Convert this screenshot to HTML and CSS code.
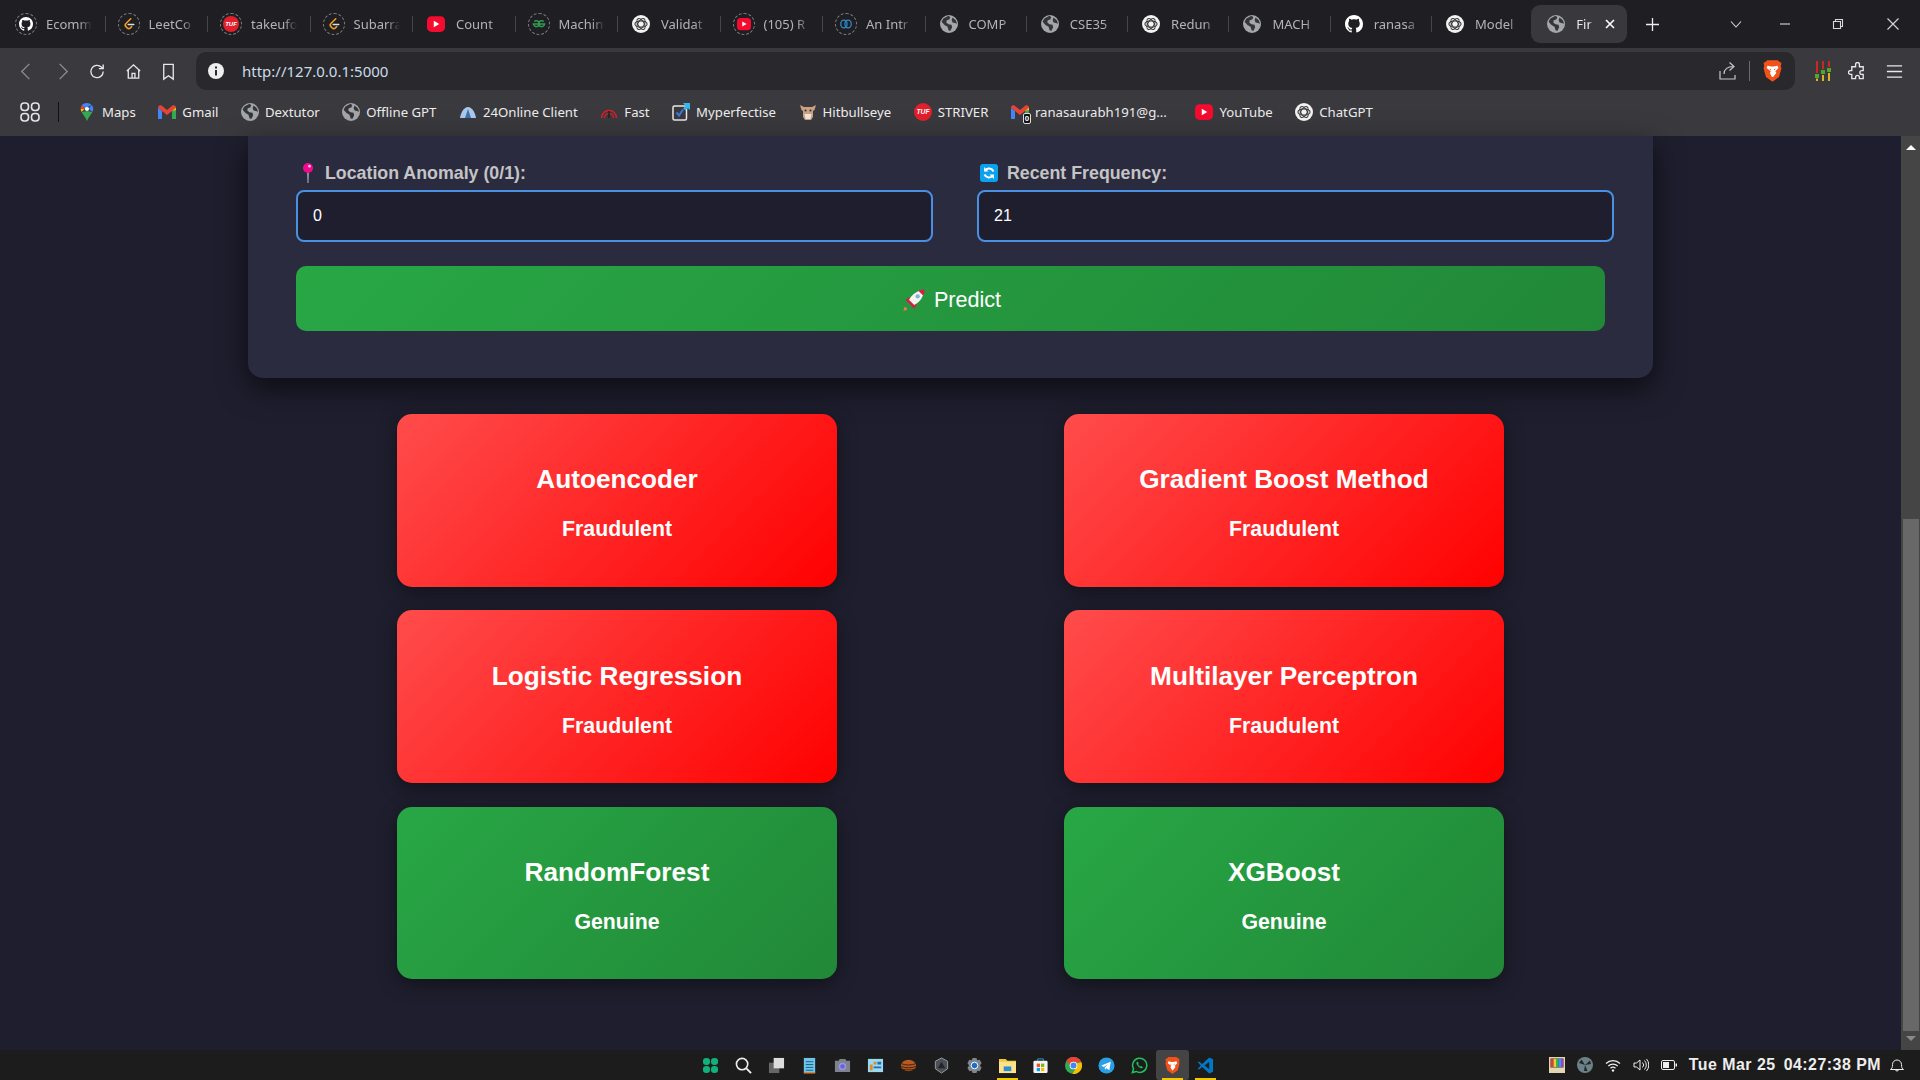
FILE: index.html
```html
<!DOCTYPE html>
<html lang="en">
<head>
<meta charset="utf-8">
<title>Fraud Detection</title>
<link rel="stylesheet" href="styles.css">
</head>
<body>
<svg class="sprite" xmlns="http://www.w3.org/2000/svg">
  <symbol id="github" viewBox="0 0 16 16"><path fill="#fff" d="M8 0C3.58 0 0 3.58 0 8c0 3.54 2.29 6.53 5.47 7.59.4.07.55-.17.55-.38 0-.19-.01-.82-.01-1.49-2.01.37-2.53-.49-2.69-.94-.09-.23-.48-.94-.82-1.13-.28-.15-.68-.52-.01-.53.63-.01 1.08.58 1.23.82.72 1.21 1.87.87 2.33.66.07-.52.28-.87.51-1.07-1.78-.2-3.64-.89-3.64-3.95 0-.87.31-1.59.82-2.15-.08-.2-.36-1.02.08-2.12 0 0 .67-.21 2.2.82.64-.18 1.32-.27 2-.27.68 0 1.36.09 2 .27 1.53-1.04 2.2-.82 2.2-.82.44 1.1.16 1.92.08 2.12.51.56.82 1.27.82 2.15 0 3.07-1.87 3.75-3.65 3.95.29.25.54.73.54 1.48 0 1.07-.01 1.93-.01 2.2 0 .21.15.46.55.38A8.013 8.013 0 0016 8c0-4.42-3.58-8-8-8z"/></symbol>
  <symbol id="leet" viewBox="0 0 16 16"><path fill="none" stroke="#f0a020" stroke-width="1.8" stroke-linecap="round" d="M10 2 4.5 7.5a2.5 2.5 0 0 0 0 3.5l1.5 1.5a2.5 2.5 0 0 0 3.5 0l1.5-1.5"/><path stroke="#ddd" stroke-width="1.6" stroke-linecap="round" d="M7 8.6h6.5"/></symbol>
  <symbol id="tuf" viewBox="0 0 16 16"><circle cx="8" cy="8" r="8" fill="#e0202c"/><text x="8" y="10" font-size="6" font-weight="700" font-style="italic" font-family="Liberation Sans" text-anchor="middle" fill="#fff">TUF</text></symbol>
  <symbol id="yt" viewBox="0 0 16 16"><rect x="0" y="1" width="16" height="14" rx="4" fill="#f40b2f"/><path fill="#fff" d="M6 5.2v5.6L11 8z"/></symbol>
  <symbol id="gfg" viewBox="0 0 16 16"><g fill="none" stroke="#2f9e4f" stroke-width="1.6"><path d="M8 8h6.4a3.4 3.4 0 1 1-1-2.8"/><path d="M8 8H1.6a3.4 3.4 0 1 0 1-2.8"/></g></symbol>
  <symbol id="gpt" viewBox="0 0 16 16"><circle cx="8" cy="8" r="8" fill="#f2f2f2"/><g fill="none" stroke="#3a3a3a" stroke-width="1"><ellipse cx="8" cy="8" rx="5.4" ry="2.8"/><ellipse cx="8" cy="8" rx="5.4" ry="2.8" transform="rotate(60 8 8)"/><ellipse cx="8" cy="8" rx="5.4" ry="2.8" transform="rotate(120 8 8)"/></g></symbol>
  <symbol id="intro" viewBox="0 0 16 16"><g fill="none" stroke="#2f86c4" stroke-width="1.5"><ellipse cx="5.6" cy="8" rx="3.6" ry="4.4"/><ellipse cx="10.4" cy="8" rx="3.6" ry="4.4"/></g></symbol>
  <symbol id="globe" viewBox="0 0 16 16"><circle cx="8" cy="8" r="8" fill="#a4a6a9"/><path fill="#34353a" d="M3 3.2 7.6.6l1.6 1.5-1 2-2.2.6-.4 2 1.9 1.6 2.7.3.6 2.2-1.5 3.2-1.6-.3-1-3.2-2.7-1.6L1.4 6zM11.2 2.2l3 2.6.9 3-1.9-.7-2-.4-.9-2.3z"/></symbol>
  <symbol id="maps" viewBox="0 0 16 20"><path fill="#34a853" d="M8 20C6.6 16 3.5 13 2 10l6-1 6 1c-1.5 3-4.600 6-6 10z"/><path fill="#fbbc04" d="M1 6.500c0 1.500.4 2.500 1 3.500l4-4z"/><path fill="#ea4335" d="M2.200 2.200 6 6 1 6.500c0-1.700.4-3.100 1.200-4.300z"/><path fill="#4285f4" d="M8 0c2 0 3.800.9 5 2.300L6 6 2.200 2.200C3.500.8 5.600 0 8 0z"/><path fill="#4285f4" d="M13 2.300c1.300 1.200 2 2.800 2 4.400 0 1.200-.4 2.300-1 3.300L10 6.500z"/><circle cx="8" cy="6.700" r="2.300" fill="#fff"/></symbol>
  <symbol id="gmail" viewBox="0 0 18 14"><path fill="#4285f4" d="M0 2.500 0 14h4V6z"/><path fill="#34a853" d="M14 6v8h4V2.500z"/><path fill="#ea4335" d="M0 2.500C0 .5 2 -.5 3.500.6L9 5l5.500-4.400C16-.5 18 .5 18 2.500L14 6 9 10 4 6z"/><path fill="#fbbc04" d="M14 6 18 2.500V5z"/></symbol>
  <symbol id="online" viewBox="0 0 18 14"><path fill="#a9c8ea" d="M1 13C2 7 5 2 9 2s7 5 8 11z"/><path fill="#3e6fa8" d="M9 4l3 9H6z"/></symbol>
  <symbol id="fast" viewBox="0 0 18 14"><g fill="none" stroke="#d3222a" stroke-width="1.500"><path d="M1.500 13a7.500 7.500 0 0 1 15 0"/><path d="M4.500 13a4.500 4.500 0 0 1 9 0"/></g><path stroke="#222" stroke-width="1.500" d="M9 6v7"/></symbol>
  <symbol id="myp" viewBox="0 0 18 18"><rect x="1" y="3" width="13.500" height="14" rx="1.500" fill="none" stroke="#e8e8e8" stroke-width="1.500"/><path fill="none" stroke="#3a78d8" stroke-width="2" d="m4.500 9.500 2.500 3 4-6"/><path fill="#35b6ef" d="M11 0h7v7l-2.300-2-2.500 2.500-2-2L13.500 3z"/></symbol>
  <symbol id="hit" viewBox="0 0 18 18"><path fill="#c9a184" d="M1 2 5 4h8l4-2-1.500 5-1.500 1v6l-2 3H6l-2-3V8L2.500 7z"/><path fill="#f1e4d8" d="M5.500 11h7l-1 5h-5z"/><circle cx="6.500" cy="7.500" r="1" fill="#3b2a20"/><circle cx="11.500" cy="7.500" r="1" fill="#3b2a20"/></symbol>
  <symbol id="brave" viewBox="0 0 16 18"><path fill="#f1511b" d="M3.500 0h9L14 1.500l1.500.5-.5 3 .5 1.800-2 7.200L8 18l-5.500-4L.5 6.800 1 5 .5 2 2 1.500z"/><path fill="#fff" d="M3.800 4.500 7 5.300h2l3.200-.8.8 2-2.600 2.800.8 1.400L8.500 14h-1L5.800 10.700l.8-1.400L3 6.500z"/><path fill="#f1511b" d="M5.300 6.800 7 7.600l-.8.7zM10.700 6.800 9 7.600l.8.7z"/></symbol>
  <symbol id="chrome" viewBox="0 0 16 16"><circle cx="8" cy="8" r="8" fill="#34a853"/><path fill="#ea4335" d="M1.200 3.800A8 8 0 0 1 15.400 5H8a3 3 0 0 0-2.900 2.200z"/><path fill="#fbbc04" d="M15.400 5A8 8 0 0 1 7 16l3.600-6.200A3 3 0 0 0 10.700 6z"/><circle cx="8" cy="8" r="3.600" fill="#fff"/><circle cx="8" cy="8" r="2.800" fill="#4285f4"/></symbol>
</svg>

<div class="tabstrip">
  <div class="tab"><span class="fav ring"><svg class="i14"><use href="#github"/></svg></span><span class="tt">Ecomm</span></div>
  <div class="tab"><span class="fav ring"><svg class="i14"><use href="#leet"/></svg></span><span class="tt">LeetCo</span></div>
  <div class="tab"><span class="fav ring"><svg class="i16"><use href="#tuf"/></svg></span><span class="tt">takeufo</span></div>
  <div class="tab"><span class="fav ring"><svg class="i14"><use href="#leet"/></svg></span><span class="tt">Subarra</span></div>
  <div class="tab"><span class="fav"><svg class="i18"><use href="#yt"/></svg></span><span class="tt">Count</span></div>
  <div class="tab"><span class="fav ring"><svg class="i14"><use href="#gfg"/></svg></span><span class="tt">Machin</span></div>
  <div class="tab"><span class="fav"><svg class="i18"><use href="#gpt"/></svg></span><span class="tt">Validat</span></div>
  <div class="tab"><span class="fav ring"><svg class="i14"><use href="#yt"/></svg></span><span class="tt">(105) R</span></div>
  <div class="tab"><span class="fav ring"><svg class="i14"><use href="#intro"/></svg></span><span class="tt">An Intr</span></div>
  <div class="tab"><span class="fav"><svg class="i18"><use href="#globe"/></svg></span><span class="tt">COMP</span></div>
  <div class="tab"><span class="fav"><svg class="i18"><use href="#globe"/></svg></span><span class="tt">CSE35</span></div>
  <div class="tab"><span class="fav"><svg class="i18"><use href="#gpt"/></svg></span><span class="tt">Redun</span></div>
  <div class="tab"><span class="fav"><svg class="i18"><use href="#globe"/></svg></span><span class="tt">MACH</span></div>
  <div class="tab"><span class="fav"><svg class="i18"><use href="#github"/></svg></span><span class="tt">ranasa</span></div>
  <div class="tab"><span class="fav"><svg class="i18"><use href="#gpt"/></svg></span><span class="tt">Model</span></div>
  <div class="tab active"><span class="fav"><svg class="i18"><use href="#globe"/></svg></span><span class="tt short">Fir</span>
    <svg class="tabx" viewBox="0 0 10 10"><path d="M1 1l8 8M9 1l-8 8"/></svg></div>
  <svg class="newtab" viewBox="0 0 14 14"><path d="M7 0v14M0 7h14"/></svg>
  <div class="winctl">
    <svg viewBox="0 0 14 14"><path d="M2 4.500 7 10l5-5.500"/></svg>
    <svg viewBox="0 0 14 14"><path d="M2 7h10"/></svg>
    <svg viewBox="0 0 14 14"><path d="M2.500 4.500h7v7h-7zM4.500 4.500v-2h7v7h-2"/></svg>
    <svg viewBox="0 0 14 14"><path d="M1.500 1.500l11 11M12.500 1.500l-11 11"/></svg>
  </div>
</div>

<div class="toolbar">
  <svg class="nav dim" viewBox="0 0 20 20"><path d="M13 2 5 10l8 8"/></svg>
  <svg class="nav dim" viewBox="0 0 20 20"><path d="m7 2 8 8-8 8"/></svg>
  <svg class="nav" viewBox="0 0 20 20"><path d="M16 10a6.500 6.500 0 1 1-2-4.700L16 7M16 2.500V7h-4.500"/></svg>
  <svg class="nav" viewBox="0 0 20 20"><path d="M3 9.500 10 3l7 6.500M4.500 8.500V17h11V8.500M8.500 17v-5h3v5"/></svg>
  <svg class="nav" viewBox="0 0 20 20"><path d="M5 2.500h10V18l-5-3.500L5 18z"/></svg>
  <div class="address">
    <svg class="info" viewBox="0 0 16 16"><circle cx="8" cy="8" r="8" fill="#eee"/><path d="M7 3.500h2v2H7zM7 7h2v5.500H7z" fill="#29292d"/></svg>
    <span class="url">http://127.0.0.1:5000</span>
    <svg class="share" viewBox="0 0 20 20"><path d="M2 10v8h15v-4M6 13c0-5 4-7.500 9-7.500M11.500 1.500 16 5.500l-4.500 4"/></svg>
    <span class="vsep"></span>
    <svg class="brave"><use href="#brave"/></svg>
  </div>
  <svg class="bars" viewBox="0 0 18 20">
    <path fill="#c8281e" d="M2 0h2v12H2zM8 0h2v8H8zM14 0h2v6h-2z"/>
    <path fill="#4fa82a" d="M1 13h4v4H1zM7 9h4v4H7zM13 7h4v4h-4z"/>
    <path fill="#d8b41e" d="M2 17.500h2V20H2zM8 14h2v6H8zM14 12h2v8h-2z"/>
  </svg>
  <svg class="nav puzzle" viewBox="0 0 20 20"><path d="M8 2.500a2 2 0 0 1 4 0V5h4v4h-1.500a2 2 0 0 0 0 4H16v4.500h-4v-1.500a2 2 0 0 0-4 0v1.500H4V13H2.500a2 2 0 0 1 0-4H4V5h4z"/></svg>
  <svg class="nav menu" viewBox="0 0 20 20"><path d="M2 4h16M2 10h16M2 16h16"/></svg>
</div>

<div class="bookmarks">
  <svg class="apps" viewBox="0 0 20 20"><g fill="none" stroke="#e4e4e4" stroke-width="1.600"><rect x="1" y="1" width="7.500" height="7.500" rx="3.200"/><rect x="11.500" y="1" width="7.500" height="7.500" rx="3.200"/><rect x="1" y="11.500" width="7.500" height="7.500" rx="3.200"/><rect x="11.500" y="11.500" width="7.500" height="7.500" rx="3.200"/></g></svg>
  <span class="bsep"></span>
  <div class="bm first"><svg class="b-ic"><use href="#maps"/></svg>Maps</div>
  <div class="bm"><svg class="b-ic"><use href="#gmail"/></svg>Gmail</div>
  <div class="bm"><svg class="b-ic"><use href="#globe"/></svg>Dextutor</div>
  <div class="bm"><svg class="b-ic"><use href="#globe"/></svg>Offline GPT</div>
  <div class="bm"><svg class="b-ic"><use href="#online"/></svg>24Online Client</div>
  <div class="bm"><svg class="b-ic"><use href="#fast"/></svg>Fast</div>
  <div class="bm"><svg class="b-ic"><use href="#myp"/></svg>Myperfectise</div>
  <div class="bm"><svg class="b-ic"><use href="#hit"/></svg>Hitbullseye</div>
  <div class="bm"><svg class="b-ic"><use href="#tuf"/></svg>STRIVER</div>
  <div class="bm mail"><span class="mailic"><svg class="b-ic"><use href="#gmail"/></svg><span class="badge">0</span></span>ranasaurabh191@g...</div>
  <div class="bm"><svg class="b-ic"><use href="#yt"/></svg>YouTube</div>
  <div class="bm"><svg class="b-ic"><use href="#gpt"/></svg>ChatGPT</div>
</div>

<div class="viewport">
  <main class="page">
    <section class="panel">
      <div class="fields">
        <div class="field">
          <label class="lbl" for="loc">
            <svg class="emoji" viewBox="0 0 14 24"><path fill="#c9c9c9" d="M6.200 11h1.600l-.3 13h-1z"/><circle cx="7" cy="6" r="6" fill="#f20a8c"/><circle cx="8.800" cy="3.800" r="1.600" fill="#ffd0ea"/></svg>
            Location Anomaly (0/1):</label>
          <input class="inp" id="loc" value="0">
        </div>
        <div class="field">
          <label class="lbl tight" for="freq">
            <svg class="emoji wide" viewBox="0 0 18 18"><rect width="18" height="18" rx="3" fill="#0aa2ee"/><path fill="none" stroke="#fff" stroke-width="2" d="M13.500 7.500A5 5 0 0 0 5 6.500M4.500 10.500A5 5 0 0 0 13 11.500"/><path fill="#fff" d="M4 3v4.500h4.500zM14 15v-4.500H9.500z"/></svg>
            Recent Frequency:</label>
          <input class="inp" id="freq" value="21">
        </div>
      </div>
      <button class="predict" type="button">
        <svg class="rocket" viewBox="0 0 24 24"><path fill="#f2774a" d="M1.500 19.500a3 3 0 0 1 3 3l-4 1.500z"/><path fill="#d81e46" d="M7.500 8.500 2.500 12l3.500 3zM15.500 16.500l-3.500 5-3-3.500z"/><path fill="#f6f3f0" d="M23 1C17 1 10 5 6.500 12l5.500 5.500c7-3.500 11-10.500 11-16.500z"/><path fill="#d81e46" d="M23.500.5c-2.300 0-4.700.4-6.800 1.300l5.500 5.500c.9-2.100 1.300-4.500 1.300-6.800zM6.500 12l5.500 5.500-2 1.500L5 14z"/><circle cx="16" cy="8" r="2.400" fill="#7fb6dc"/></svg>
        Predict
      </button>
    </section>

    <section class="results">
      <article class="card bad"><h3 class="model">Autoencoder</h3><p class="verdict">Fraudulent</p></article>
      <article class="card bad"><h3 class="model">Gradient Boost Method</h3><p class="verdict">Fraudulent</p></article>
      <article class="card bad"><h3 class="model">Logistic Regression</h3><p class="verdict">Fraudulent</p></article>
      <article class="card bad"><h3 class="model">Multilayer Perceptron</h3><p class="verdict">Fraudulent</p></article>
      <article class="card good"><h3 class="model">RandomForest</h3><p class="verdict">Genuine</p></article>
      <article class="card good"><h3 class="model">XGBoost</h3><p class="verdict">Genuine</p></article>
    </section>
  </main>
  <div class="scrollbar">
    <span class="arrow up"></span>
    <span class="thumb"></span>
    <span class="arrow down"></span>
  </div>
</div>

<footer class="taskbar">
  <div class="apps-row">
    <span class="tk"><svg viewBox="0 0 18 18"><g fill="#12b07a"><rect x="1" y="1" width="7.500" height="7.500" rx="3.500"/><rect x="9.500" y="1" width="7.500" height="7.500" rx="3.500"/><rect x="1" y="9.500" width="7.500" height="7.500" rx="3.500"/><rect x="9.500" y="9.500" width="7.500" height="7.500" rx="3.500"/></g></svg></span>
    <span class="tk"><svg viewBox="0 0 18 18"><circle cx="7.500" cy="7.500" r="6" fill="none" stroke="#eee" stroke-width="1.700"/><path stroke="#eee" stroke-width="2" d="m12 12 5 5"/></svg></span>
    <span class="tk"><svg viewBox="0 0 18 18"><rect x="1" y="6" width="11" height="11" fill="#666"/><rect x="6" y="1" width="11" height="11" fill="#ddd"/></svg></span>
    <span class="tk"><svg viewBox="0 0 18 18"><rect x="3" y="1" width="12" height="16" fill="#6fc6ea"/><path stroke="#1a5a7a" d="M5 5h8M5 8h8M5 11h8M5 14h8"/><path fill="#e27a2a" d="M3 16h12v1.500H3z"/></svg></span>
    <span class="tk"><svg viewBox="0 0 18 18"><path fill="#7d838a" d="M1 4h4l1-2h6l1 2h4v12H1z"/><circle cx="9" cy="10" r="4" fill="#a68ce8"/><circle cx="9" cy="10" r="2.300" fill="#4b6fd0"/></svg></span>
    <span class="tk"><svg viewBox="0 0 18 18"><rect x="1" y="2" width="16" height="14" fill="#9bd8f2"/><path fill="#e08a2a" d="M3 8h3v6H3zM7 5h3v3H7z"/><path fill="#1f6fb0" d="M11 5h4v3h-4zM7 10h8v2H7z"/></svg></span>
    <span class="tk"><svg viewBox="0 0 18 18"><ellipse cx="9" cy="9" rx="8" ry="6" fill="#b55a22"/><path stroke="#3d1d08" fill="none" d="M1.500 7c4 2 11 2 15 0M1.500 10c4 2 11 2 15 0M3 13c4 1 8 1 12 0"/></svg></span>
    <span class="tk"><svg viewBox="0 0 18 18"><path fill="#4c4f55" stroke="#9a9da3" d="M9 1l6.500 3.500v8L9 17l-6.500-4.500v-8z"/><path fill="#23252a" d="M9 5l4 7H5z"/></svg></span>
    <span class="tk"><svg viewBox="0 0 18 18"><path fill="#7f858c" d="M7 1h4l1 2.500 2.500-.5 2 3.500L15 8.500v1l1.500 2-2 3.500-2.500-.5L11 17H7l-1-2.500-2.500.5-2-3.500 1.500-2v-1L1.500 6.500l2-3.500 2.500.500z"/><circle cx="9" cy="9" r="3.500" fill="#1c6fc4" stroke="#fff"/></svg></span>
    <span class="tk on"><svg viewBox="0 0 18 18"><path fill="#f4c63d" d="M0 2h7l2 2h9v3H0z"/><path fill="#fde28a" d="M0 5h18v12H0z"/><rect x="5" y="10" width="8" height="5" fill="#2a8fd8"/></svg></span>
    <span class="tk"><svg viewBox="0 0 18 18"><path fill="none" stroke="#2a9fd8" d="M6 4V2h6v2"/><rect x="1.500" y="4" width="15" height="13" rx="1.500" fill="#f4f4f4"/><path fill="#f25022" d="M5 7h3.500v3.500H5z"/><path fill="#7fba00" d="M9.500 7H13v3.500H9.500z"/><path fill="#00a4ef" d="M5 11.500h3.500V15H5z"/><path fill="#ffb900" d="M9.500 11.500H13V15H9.500z"/></svg></span>
    <span class="tk"><svg viewBox="0 0 16 16"><use href="#chrome"/></svg></span>
    <span class="tk"><svg viewBox="0 0 18 18"><circle cx="9" cy="9" r="8.500" fill="#2a9fe6"/><path fill="#fff" d="m3.500 9 10-4-1.500 9-3-2-1.500 1.500-.5-2.500 4-3.500-5 3z"/></svg></span>
    <span class="tk"><svg viewBox="0 0 18 18"><path fill="none" stroke="#22c15e" stroke-width="1.600" d="M1.500 16.500l1.200-4A7.500 7.500 0 1 1 5.500 15.300z"/><path fill="#22c15e" d="M6.500 5c-1 .6-1 2 0 3.500s2.500 3 4 3.500c1 .2 2-.5 2-1.500l-2-1-.8.800C8.700 9.500 8 8.800 7.500 7.500l.7-.8L7.200 5z"/></svg></span>
    <span class="tk on cur"><svg viewBox="0 0 16 18"><use href="#brave"/></svg></span>
    <span class="tk on"><svg viewBox="0 0 18 18"><path fill="#0078c8" d="M13 .500 17 2.500v13l-4 2L5.500 10.500 2 13.200.800 12.500 4 9 .800 5.500 2 4.800l3.500 2.700z"/><path fill="#1f1f1f" d="M13 5 8 9l5 4z"/></svg></span>
  </div>
  <div class="tray">
    <svg viewBox="0 0 16 16"><rect width="16" height="16" fill="#e4d5b0"/><rect x="1.500" y="1.500" width="13" height="9" fill="#333"/><path fill="#e33" d="M2 2h2.500v8H2z"/><path fill="#ec3" d="M4.500 2H7v8H4.500z"/><path fill="#3b4" d="M7 2h2.500v8H7z"/><path fill="#39e" d="M9.500 2H12v8H9.500z"/><path fill="#a3d" d="M12 2h2v8h-2z"/></svg>
    <svg viewBox="0 0 16 16"><circle cx="8" cy="8" r="8" fill="#6d8288"/><path fill="#22282a" d="M8 8 4.500 2.500 2 6zM8 8l6-1-1-3.500zM8 8l-1 6h3.500z"/></svg>
    <svg viewBox="0 0 16 16"><g fill="none" stroke="#eee" stroke-width="1.200"><path d="M1 6.500a10 10 0 0 1 14 0M3.300 9a7 7 0 0 1 9.400 0M5.500 11.300a3.600 3.600 0 0 1 5 0"/></g><circle cx="8" cy="13.500" r="1.200" fill="#eee"/></svg>
    <svg viewBox="0 0 16 16"><g fill="none" stroke="#eee"><path d="M1 6v4h2.500L7 13V3L3.500 6zM9.500 5.500a3.500 3.500 0 0 1 0 5M11.500 3.500a6.500 6.500 0 0 1 0 9M13.500 2a9 9 0 0 1 0 12"/></g></svg>
    <svg viewBox="0 0 16 16"><rect x=".5" y="3.500" width="13" height="9" rx="1.500" fill="none" stroke="#eee"/><rect x="2" y="5" width="6" height="6" fill="#eee"/><rect x="14.500" y="6.500" width="1.500" height="3" fill="#eee"/></svg>
    <span class="clock">Tue Mar 25</span>
    <span class="clock">04:27:38 PM</span>
    <svg class="bell" viewBox="0 0 16 16"><path fill="none" stroke="#eee" d="M1.500 12.500c1.500-1 2-2 2-5a4.500 4.500 0 0 1 9 0c0 3 .5 4 2 5zM6.500 12.500a1.500 1.500 0 0 0 3 0"/></svg>
  </div>
</footer>
</body>
</html>
```

FILE: styles.css
```css
* { box-sizing: border-box; }
html, body { margin: 0; height: 100%; overflow: hidden; }
body {
  width: 1920px; height: 1080px;
  display: flex; flex-direction: column;
  background: #1e1e2e;
  font-family: "Liberation Sans", Arial, sans-serif;
}
.sprite { display: none; }

/* tab strip */
.tabstrip {
  height: 48px; flex: none;
  display: flex; align-items: center;
  background: #1f1f23;
  padding-left: 2px;
  font: 13px "Noto Sans", sans-serif;
  color: #b4b4b6;
}
.tab {
  width: 102.5px; height: 38px; flex: none;
  display: flex; align-items: center;
  padding-left: 13px;
  position: relative;
}
.tab:nth-child(n+10) { width: 101.3px; }
.tab::after {
  content: ""; position: absolute; right: -1px; top: 11px;
  width: 1px; height: 16px; background: #47474b;
}
.tab.active::after { display: none; }
.fav { width: 22px; height: 22px; flex: none; display: flex; align-items: center; justify-content: center; border-radius: 50%; }
.fav.ring { border: 1.5px dashed #7d7d80; }
.i14 { width: 14px; height: 14px; }
.i16 { width: 16px; height: 16px; }
.i18 { width: 18px; height: 18px; }
.tt {
  margin-left: 9px; width: 46px; overflow: hidden; white-space: nowrap;
  -webkit-mask-image: linear-gradient(90deg, #000 72%, transparent);
  mask-image: linear-gradient(90deg, #000 72%, transparent);
}
.tt.short { width: 18px; color: #e6e6e6; }
.tab.active {
  width: 96px; margin-right: 6px; margin-left: -1px;
  background: #38383d; border-radius: 9px;
  padding-left: 14px;
}
.tabx { width: 10px; height: 10px; margin-left: 10.5px; fill: none; stroke: #fff; stroke-width: 1.6; }
.newtab { width: 13px; height: 13px; margin-left: 13px; fill: none; stroke: #eee; stroke-width: 1.4; }
.winctl { margin-left: auto; display: flex; align-items: center; padding-right: 20px; }
.winctl svg { width: 14px; height: 14px; fill: none; stroke: #d8d8d8; stroke-width: 1.1; }
.winctl svg + svg { margin-left: 35px; }
.winctl svg:nth-child(3) { margin-left: 38.5px; }
.winctl svg:nth-child(4) { margin-left: 41.5px; }

/* toolbar */
.toolbar {
  height: 44px; flex: none;
  display: flex; align-items: center;
  background: #3a393e;
  padding: 2px 0 0 17px;
}
.nav { width: 19px; height: 19px; flex: none; margin-right: 16.5px; fill: none; stroke: #e8e8e8; stroke-width: 1.400; }
.nav.dim { stroke: #8c8c90; }
.address {
  width: 1599px; height: 38px; flex: none; margin-left: 1.500px;
  display: flex; align-items: center;
  background: #29292d; border-radius: 10px;
  padding-left: 12px;
}
.info { width: 16px; height: 16px; flex: none; }
.url { margin-left: 18px; font: 15px "Noto Sans", sans-serif; color: #c9dbe9; }
.share { width: 20px; height: 20px; margin-left: auto; fill: none; stroke: #c8c8c8; stroke-width: 1.200; }
.vsep { width: 1px; height: 20px; margin-left: 11px; background: #6a6a6e; }
.brave { width: 19px; height: 22px; margin: 0 13px; }
.bars { width: 18px; height: 20px; margin-left: 19px; flex: none; }
.puzzle { margin-left: 16px; }
.menu { margin-left: 1px; margin-right: 0; }

/* bookmarks */
.bookmarks {
  height: 44px; flex: none;
  display: flex; align-items: center;
  background: #3a393e;
  padding: 0 0 4px 20px;
  font: 13.2px "Noto Sans", sans-serif;
  color: #ececec;
}
.apps { width: 20px; height: 20px; flex: none; }
.bsep { width: 1px; height: 20px; margin-left: 18px; background: #111; }
.bm { display: flex; align-items: center; gap: 6px; margin-left: 22.5px; white-space: nowrap; }
.bm.first { margin-left: 19px; }
.bm.mail { margin-right: 6px; }
.b-ic { width: 18px; height: 18px; flex: none; }
.mailic { display: flex; position: relative; }
.badge {
  position: absolute; right: -2px; bottom: -3px;
  width: 8px; height: 11px;
  background: #111; border: 1px solid #ddd; border-radius: 2px;
  font: 700 8px/9px "Liberation Sans", sans-serif; text-align: center; color: #fff;
}

/* page */
.viewport { flex: 1; min-height: 0; display: flex; }
.page { flex: 1; min-width: 0; display: flex; flex-direction: column; align-items: center; background: #1e1e2e; }
.panel {
  width: 1405px; flex: none;
  padding: 27px 48px 47px;
  background: #2b2b40;
  border-radius: 0 0 15px 15px;
  box-shadow: 0 10px 30px rgba(0, 0, 0, .6);
}
.fields { display: grid; grid-template-columns: 637px 637px; column-gap: 44px; }
.lbl {
  display: flex; align-items: center; gap: 10px;
  height: 20px; margin-bottom: 7px;
  font-size: 17.8px; font-weight: 700; color: #c4c4c4;
}
.emoji { width: 14px; height: 20px; flex: none; margin-left: 5px; }
.emoji.wide { width: 18px; height: 18px; margin-left: 3px; }
.lbl.tight { gap: 9px; }
.inp {
  width: 100%; height: 52px;
  padding: 0 15px;
  background: #1e1e2e; color: #fff;
  border: 2px solid #4a90e2; border-radius: 8px;
  font: 16px "Liberation Sans", Arial, sans-serif;
  outline: none;
}
.predict {
  width: 100%; height: 65px; margin-top: 24px; padding: 3px 0 0 3px;
  display: flex; align-items: center; justify-content: center; gap: 9px;
  background: linear-gradient(135deg, #28a745, #218838);
  border: 0; border-radius: 10px;
  color: #fff; font: 21.6px "Liberation Sans", Arial, sans-serif;
}
.rocket { width: 22px; height: 22px; flex: none; }

.results {
  margin-top: 36px;
  display: grid; grid-template-columns: 440px 440px; grid-auto-rows: 172.6px;
  column-gap: 227px; row-gap: 23.8px;
}
.card {
  display: flex; flex-direction: column; align-items: center; justify-content: center;
  padding-top: 5px;
  border-radius: 15px; color: #fff;
  box-shadow: 0 5px 20px rgba(0, 0, 0, .4);
}
.card.bad { background: linear-gradient(135deg, #ff4c4c, #ff0000); }
.card.good { background: linear-gradient(135deg, #28a745, #218838); }
.model { margin: 0 0 23px; font-size: 26.2px; line-height: 30px; font-weight: 700; }
.verdict { margin: 0; font-size: 21.3px; line-height: 24px; font-weight: 700; }

/* scrollbar */
.scrollbar {
  width: 19px; flex: none; background: #454545;
  display: flex; flex-direction: column; align-items: center;
  padding-top: 9px;
}
.arrow { width: 0; height: 0; border-left: 5px solid transparent; border-right: 5px solid transparent; }
.arrow.up { border-bottom: 5px solid #fff; }
.arrow.down { border-top: 5px solid #8a8a8a; }
.thumb { width: 16px; height: 512px; margin: 369px 0 5px; background: #686868; }

/* taskbar */
.taskbar {
  height: 30px; flex: none;
  display: flex; align-items: center;
  background: #1c1c1c;
}
.apps-row { display: flex; align-items: stretch; height: 30px; padding-left: 693.500px; }
.tk { width: 33px; height: 30px; display: flex; align-items: center; justify-content: center; position: relative; }
.tk svg { width: 17px; height: 17px; }
.tk.cur { background: #444; border-radius: 3px; }
.tk.on::after {
  content: ""; position: absolute; bottom: 0; left: 6px; right: 6px; height: 2px; background: #f4c900;
}
.tray { margin-left: auto; display: flex; align-items: center; padding-right: 15px; }
.tray svg { width: 16px; height: 16px; flex: none; margin-right: 12px; }
.clock { font: 700 15.9px "Liberation Sans", Arial, sans-serif; color: #eee; letter-spacing: .5px; white-space: nowrap; margin-right: 8px; }
.tray svg.bell { margin: 0; }
```
